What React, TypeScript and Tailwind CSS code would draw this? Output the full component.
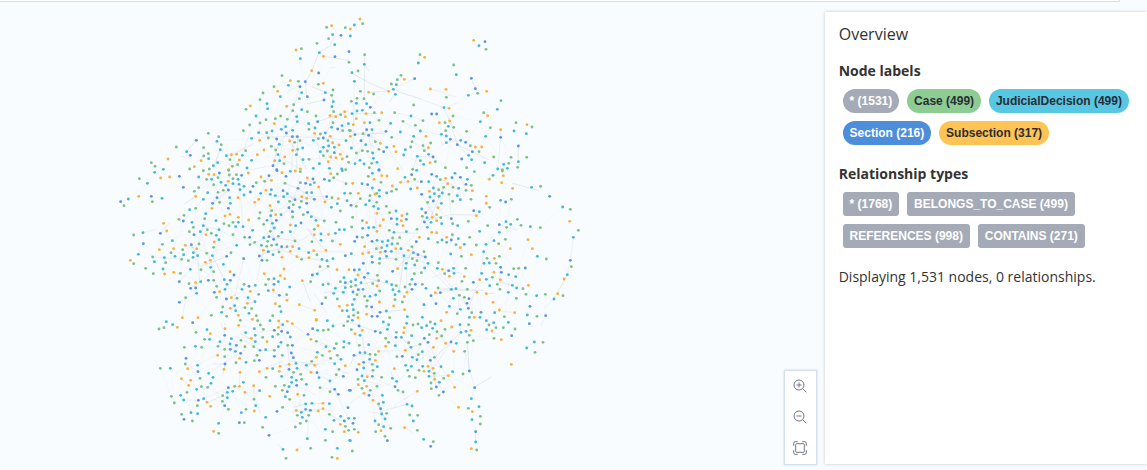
import React from 'react';

type Tile = { x: number; y: number; nodes: string; links: string };

const colors: Record<string, string> = {
  g: '#7cc184',
  o: '#f9b13c',
  c: '#41b9db',
  b: '#5b93e4',
};

// Node positions are stored in thirds of a pixel, relative to their tile.
const tiles: Tile[] = [
  {
    x: 110,
    y: 10,
    nodes:
      'g650,52 o665,47 g706,53 c668,74 b693,76 g656,86 g621,100 c674,104 o558,120 g574,116 c628,128 o640,139 b675,140 c571,146 b717,125 g717,157 o605,182 b626,189 g516,197 o541,212 g565,214 b586,215 c535,226 b570,230 g625,223 o640,220 g492,230 o503,244 c575,248 c646,248 g669,240 g665,256 g459,249 g450,269 c511,260 b592,260 g568,266 b642,270 c670,275 c471,281 c473,296 o530,289 g551,284 c666,290 g408,298 o421,288 c575,299 g548,302 g592,305 g671,305 o704,305 c438,318 g512,318 g496,326 c560,320 g618,318 o660,317 o677,320 g692,314 o706,320 g532,328 g468,329 g450,339 o493,341 c562,335 c596,341 b623,335 g669,338 g419,345 c527,350 c514,358 c548,361 g597,358 c615,354 c665,352 b683,357 c696,347 c715,341 g400,362 g698,362 g718,361 c446,368 c470,368 c486,363 b529,369 o614,370 g631,372 c646,369 g295,370 g326,380 b547,380 b562,380 o661,379 c425,385 g475,384 b500,387 g625,386 b640,384 o449,391 o539,393 g570,392 g554,397 c610,391 g654,392 c708,392 b259,391 c321,394 o668,398 g334,404 c508,403 g484,409 o687,405 c640,412 c656,408 c673,412 g199,411 g281,413 c331,419 o462,420 g497,420 g407,422 c578,414 g563,418 o548,421 c230,425 g295,431 c631,425 g652,423 b673,428 b241,436 g281,438 o364,434 o380,433 c349,437 c397,436 o442,434 c504,434 c559,434 g640,437 o691,433 o662,441 o678,443 g711,440 o697,447 o174,447 c296,446 g360,449 o273,452 o388,450 c425,451 o524,441 o494,452 c509,452 c579,449 g597,448 o655,455 g124,458 c323,458 g383,464 g522,461 c628,461 g716,457 g135,469 o253,470 c310,467 g367,469 b489,467 g239,477 g298,477 c160,478 c411,474 o356,479 o571,477 c610,475 c658,475 c695,477 b500,479 g707,479',
    links:
      '675,77 660,108 628,126 602,190 586,216 590,260|530,245 568,226|585,222 655,248|642,270 590,282|530,289 558,276|360,434 405,412 421,362|365,436 428,403|425,385 500,380 560,380 650,384 714,391|446,368 500,388|640,139 718,151|676,172 660,174|212,440 240,438|230,425 259,391|570,230 547,303 532,328|548,302 596,341 615,354|490,467 504,403 562,335|500,479 520,390|545,479 550,375|560,479 563,380|500,436 574,479|667,248 669,338 646,369|623,335 717,302|610,391 700,479|640,384 720,440|540,393 590,479|380,433 354,479|620,386 633,470|461,348 464,346|646,248 605,230|717,355 671,305|330,419 309,479|489,467 420,479',
  },
  {
    x: 350,
    y: 10,
    nodes:
      'o30,27 g38,41 c13,45 o1,57 c1,78 g44,134 c43,163 g24,183 c6,188 c13,214 g210,134 o224,142 c205,159 g153,196 g142,209 o163,208 b194,206 g124,222 c139,224 c130,238 o116,244 c136,253 g31,244 o56,247 g71,252 g21,265 g42,266 g4,274 c19,280 c50,281 b61,292 c21,303 c37,301 c6,311 o48,311 g73,308 o95,308 g134,308 c183,318 g191,285 o19,326 g87,331 g159,334 g219,332 o10,344 o43,338 c60,338 c122,340 g196,346 b50,359 c66,359 g1,362 b108,364 c151,366 c211,363 b15,374 g39,371 b56,376 o1,379 g125,382 c191,379 o228,379 b33,392 g76,395 g186,395 o91,400 g242,399 c47,404 c4,414 c110,412 g182,411 o132,409 g219,407 o235,413 g87,418 c166,419 g37,422 g53,424 g19,429 c68,429 b101,425 o138,425 g223,422 c161,435 c236,433 c202,439 b249,441 c70,445 c30,451 c211,452 g256,455 o240,458 c15,461 c42,462 g65,460 c81,457 c221,463 g58,473 o143,476 g188,478 b87,479 g286,473 o371,91 b405,95 c387,107 g408,118 g311,165 c319,194 b364,205 b376,236 o410,244 g383,250 c355,256 o241,237 o288,238 g289,262 c282,293 o297,295 g309,318 b245,312 b260,312 o299,333 o268,338 g285,338 c295,349 g311,352 g287,362 g350,364 c274,373 c289,378 b301,388 c289,398 b322,404 c332,391 b347,397 g361,407 o376,411 o395,411 b367,425 g387,425 c356,436 b335,447 c365,449 c404,458 g350,473 g401,308 o413,317 c391,335 c442,298 g453,272 g421,353 o452,359 c407,379 b452,382 g498,338 o531,344 g546,351 c492,363 c529,371 b505,408 g431,441 g483,442 g530,442 c505,455 g476,460 c461,463 g503,472 c443,477 c472,475 g457,479',
    links:
      '5,190 60,219 116,244 56,247|116,244 194,206|130,238 282,293 323,278|136,253 118,276|141,245 218,268|205,159 210,134|282,293 299,333 322,404 415,448|289,398 332,391|0,362 50,376 102,395|2,311 83,311|134,308 183,318 219,332|159,334 211,363 289,378|15,374 104,370|33,392 0,423|50,359 15,461|43,134 43,266|13,214 8,420|242,237 320,262|364,205 376,236|442,298 453,272|452,359 452,382 443,477|505,408 504,455|56,376 72,460 106,477|110,412 159,479|188,478 202,439 249,441|274,405 289,398|33,392 96,420|43,163 58,184|45,404 0,465|121,340 108,364 53,372|356,436 322,404',
  },
  {
    x: 110,
    y: 170,
    nodes:
      'c134,7 g88,26 c112,40 o152,24 o179,21 b208,19 c266,21 g280,2 b220,52 g266,53 g253,64 c293,68 o257,79 o86,79 b124,79 c55,87 b32,95 g42,107 g127,95 c156,85 c280,88 o296,13 o312,14 b328,9 g290,28 c305,28 g324,23 g311,44 c333,37 c347,46 o355,34 g358,15 g379,14 g369,26 c384,28 b395,16 o415,9 g356,1 c369,41 c387,43 c402,49 b429,49 c390,59 b355,60 g340,61 g324,67 c402,75 b421,66 o384,83 b321,83 c359,83 g329,97 b308,100 c361,100 o306,115 b355,115 g257,115 c239,119 c287,131 g222,136 g207,148 b220,153 g284,146 c318,152 o345,138 o360,133 o385,142 c246,157 g342,161 g357,167 g369,157 c385,157 c377,170 c399,170 o416,150 g447,145 c280,167 g250,172 o161,160 o170,183 b151,190 c99,188 g71,195 g238,185 c271,185 b252,194 g292,179 o288,194 g304,190 c327,179 c319,196 c428,181 g369,194 g404,202 b419,202 c327,209 c187,212 o313,216 g434,217 g420,224 c380,226 b100,221 g157,223 o226,226 b244,224 g267,222 g311,232 o148,239 o191,236 o260,236 g218,239 g183,248 c250,248 g290,250 c85,253 c221,254 c195,259 c263,257 c307,257 g363,248 g128,261 c163,263 c249,262 b350,259 b401,266 o61,271 g71,281 c133,275 g167,278 g215,268 g235,272 o301,271 o286,277 c340,283 g107,295 c159,297 o191,307 o164,312 g130,311 g211,310 c241,298 g273,299 c302,292 g311,305 o360,305 b372,315 b208,335 g237,341 o257,338 c272,335 b295,331 g311,331 c343,329 b361,331 c351,343 g320,349 b242,355 b257,354 c345,358 c260,370 b313,367 o329,365 g227,383 b208,397 g320,382 b349,387 o364,383 g381,385 c396,358 g402,343 b417,349 c436,346 o421,364 c414,383 g446,373 o412,400 g338,411 c374,407 o361,415 c377,422 g405,413 g425,416 c435,395 c335,427 g350,439 g304,436 o385,436 c417,430 g439,437 o217,443 o264,443 o427,448 b501,2 o516,8 b528,19 c541,4 o556,3 o453,21 b477,17 g464,34 o484,31 g439,38 g525,40 g571,5 b609,27 o592,24 g613,38 c601,44 b587,40 g571,38 b643,28 c658,32 g671,23 o662,11 g682,12 c697,2 g708,41 b564,55 o626,51 c484,59 o468,61 b519,62 c452,70 c481,73 c496,77 c532,71 c590,68 c605,68 c704,70 c521,80 o434,97 o446,88 b555,89 g539,94 o575,80 o590,85 b613,88 g574,94 b590,100 c505,96 o480,107 g550,104 b537,113 c569,112 b650,80 o645,96 g666,83 o685,86 c711,92 c682,101 c664,112 g691,123 b547,125 b593,127 g485,122 g450,128 o497,134 c513,134 g548,141 g580,134 c604,140 c482,137 c471,151 b499,151 c618,151 g643,153 g461,163 c487,160 b573,159 o541,165 c557,167 o624,167 g678,157 c493,174 g481,184 g613,178 c541,185 c516,187 g505,199 b477,200 b491,208 o613,194 c633,192 o656,193 c676,190 c688,179 c703,179 c461,203 g473,214 g555,213 c633,211 g606,215 g667,213 c454,226 g470,229 g485,226 c500,224 b515,230 g531,230 o548,230 o691,223 o460,241 b475,245 g507,246 o541,244 c567,236 o611,242 o648,241 c596,248 g621,254 c489,254 b448,258 o516,262 o561,260 g575,268 o597,263 b456,271 g471,271 c636,268 c669,266 c651,272 b706,257 g630,290 g654,289 o681,299 o717,299 o522,297 o463,311 o511,317 o524,326 b607,315 c622,312 c702,323 g476,328 c492,326 c505,335 g467,344 b492,343 g602,335 o577,332 b706,338 g691,335 c639,344 g655,342 c539,351 c676,355 c706,353 c475,362 o490,360 b508,376 g530,374 o531,391 c671,370 c700,367 g647,383 g682,387 b636,401 o496,401 g509,409 o568,404 o688,409 o712,406 o614,421 g697,422 c711,422 c513,425 g488,437 c716,440 o619,448',
    links:
      '222,103 257,79|220,153 257,115 280,88|100,188 140,178|151,190 180,157|32,95 56,87|128,261 215,268|242,224 263,257 268,330|226,226 295,248 311,305|242,300 208,335|242,355 272,335|208,397 260,370|321,83 355,115 387,142|355,60 308,100|280,167 327,179 380,208|398,166 405,202 461,241|420,224 477,200 555,213|437,42 500,12|410,101 452,70 521,80 590,85 686,90|525,40 564,55 613,88|570,40 537,113 461,203|575,80 652,80|626,51 645,96|521,62 593,127 640,153|478,100 482,137 491,208|593,179 650,246|598,180 618,220|633,192 691,223|520,240 561,260 660,275|508,246 607,191|551,244 705,246|448,258 475,245 531,230|420,364 475,362 540,387|640,368 707,364|577,332 601,395|614,421 570,404|613,372 650,430|607,315 660,290|471,344 511,317|522,297 505,335|350,259 275,288|350,387 394,366|335,427 361,415 405,413|412,400 435,395|217,443 227,383|660,22 709,40|676,355 719,342|477,17 433,115|390,59 399,170|307,257 343,329|460,241 440,330|401,266 363,430',
  },
  {
    x: 350,
    y: 170,
    nodes:
      'b87,1 c67,10 g55,19 o95,17 o111,18 o72,28 g93,37 o8,40 c36,41 b53,44 o127,48 c67,54 c88,61 g80,70 g125,64 c110,69 g139,58 o25,70 g1,70 o75,73 g60,77 c88,79 g31,86 c58,92 g80,97 c47,104 b3,106 g19,109 c71,109 g109,109 c85,116 c138,123 g119,128 o81,130 o156,137 g171,132 g8,142 b124,146 c141,147 b169,148 o154,152 g37,152 o100,149 o50,158 c141,163 o159,167 o90,167 c71,172 c38,175 c56,173 g5,171 g118,181 c132,187 o81,184 c169,185 b53,196 b21,201 g37,202 b14,214 b66,214 c81,211 c97,215 c114,212 g128,204 g149,203 c126,222 g143,221 c111,227 o44,230 g79,236 g95,233 o137,236 c153,236 b106,244 c124,244 o175,241 g186,230 c4,251 o38,251 o56,248 o91,247 c66,260 c110,259 c89,266 g138,268 c162,257 c190,248 b204,254 b226,261 g187,266 g201,272 g222,245 b40,280 b67,277 g88,280 c169,280 c194,285 c167,295 b13,300 c28,299 o143,296 b128,304 o24,315 g82,316 b43,322 c54,310 c17,329 g86,332 c3,335 c33,338 c110,335 g193,311 g214,308 c224,294 c234,280 c125,344 g139,347 c186,328 g180,343 b196,343 g217,343 g17,346 g3,350 o81,348 g68,341 b25,359 c39,358 b9,366 c129,359 g165,351 b186,358 c228,355 g89,363 o171,367 c147,364 c135,374 g21,374 g44,379 c60,379 c77,375 o163,380 g135,389 g52,392 g157,396 c13,388 o88,396 c7,404 g50,409 b65,411 o131,408 b222,404 c10,419 o164,419 c109,423 b90,427 o50,433 g24,428 g11,436 b66,439 b82,439 o24,443 g119,443 c172,440 c217,442 c165,22 b185,14 c200,1 g194,28 o174,34 o152,37 b214,35 c236,35 c182,57 o202,54 b215,73 b245,13 c260,19 o287,25 b306,23 g271,29 c315,10 b331,22 c352,28 o293,41 b348,43 g364,46 g281,52 g309,52 c326,55 c250,54 g266,59 o238,64 g348,61 o367,62 c277,69 g297,73 c253,71 c267,79 c240,81 c322,77 g308,94 c331,89 g363,88 b250,93 g233,97 c274,100 o264,113 c215,117 b227,128 o260,134 g217,139 c231,143 o247,142 g272,143 b304,146 b223,156 c243,157 o260,152 c275,161 g308,161 g355,154 c323,167 g201,178 c232,172 o245,187 o260,188 g307,194 o208,202 o290,202 c235,206 b199,215 c276,210 g263,217 c290,217 b304,210 c325,206 g359,202 g318,224 c343,223 o331,233 g379,225 c389,184 c302,252 g334,259 o364,254 g265,278 c262,295 o277,298 c311,295 b296,302 g284,311 c312,310 o298,319 g347,295 o343,320 g336,334 b370,337 o389,329 c395,310 c409,328 c402,280 c418,279 g411,265 o433,265 g438,280 g264,354 c304,358 c318,356 b271,368 o256,368 b243,377 g328,376 g343,382 c310,385 b357,386 g352,358 o381,367 o409,371 b258,401 b351,400 b355,415 c298,409 c331,418 o290,427 g322,431 g365,428 b393,427 c358,442 o373,442 c390,442 g373,5 o409,79 o409,100 g419,112 b371,122 c388,125 o379,137 c429,16 o418,28 o460,17 g457,3 o455,38 o488,55 c545,52 g572,49 c452,91 b467,96 g484,88 b599,79 c638,111 g661,118 o659,154 g685,181 c670,202 g502,148 c468,155 c482,163 g513,166 b448,164 g413,167 g470,172 c541,170 g571,173 c448,187 g466,208 c432,212 o534,209 g446,221 c408,223 o481,236 o547,236 c401,245 c562,259 g589,267 g448,259 b661,271 g664,290 b452,292 g491,296 g506,295 b526,294 o432,307 b454,307 c476,314 c497,320 g427,322 o451,329 c652,314 o642,327 c419,347 g442,343 c487,346 o535,346 c500,354 g450,358 g519,356 c475,367 g528,373 c560,377 g586,373 o623,371 g639,377 g499,385 c612,387 o429,397 b540,409 o448,420 c434,428 o494,428 g463,440 c532,435 g561,439 b587,437',
    links:
      '488,40 567,62|448,164 502,181|482,163 502,181|304,134 379,135|371,122 388,125 379,137|234,150 301,134|132,187 204,190|35,245 90,230|44,250 106,244 180,256|88,266 226,261|60,77 100,149|71,109 81,184|3,106 24,98|75,73 125,64 165,22|50,50 88,79 141,147|154,37 214,35|141,245 200,192 245,142|201,178 250,93|215,73 260,152|298,73 304,146|348,61 331,22|281,52 238,150|245,13 301,42 350,80|199,215 169,280 171,367|128,304 190,248 226,261|190,248 371,427|226,261 350,400|162,257 147,364|110,259 66,214|54,196 143,296|50,325 139,347 163,380|13,300 86,332|28,299 80,392|3,350 89,330|40,405 88,439|65,411 9,366|90,427 164,419|163,351 222,404|258,401 243,377 318,356|270,360 404,361|264,354 352,358|355,415 389,329 401,245|409,371 434,370|430,424 490,427|580,417 612,387|612,387 652,314|652,314 662,271|296,302 245,324|277,298 334,310|204,254 172,220|160,167 169,185|409,28 429,16|409,79 409,100|448,340 451,292|487,346 448,335|432,212 408,223|661,271 670,202',
  },
  {
    x: 110,
    y: 320,
    nodes:
      'c169,5 c188,14 g162,23 g147,27 o202,22 b248,8 g258,37 c291,29 o301,41 g284,58 c299,58 g223,82 c256,79 g275,82 c330,65 b344,46 o345,26 o386,16 g391,1 c364,56 c360,72 b379,76 b361,88 c376,94 b392,100 g324,79 g344,88 o323,106 g344,110 c407,38 c433,26 g443,2 g451,15 g460,28 c436,46 g458,52 o424,55 c436,65 g393,61 g405,80 g431,80 c450,91 c467,89 o471,65 g441,106 b448,121 g433,122 c408,127 g378,128 o389,115 b345,132 o342,148 o390,157 b228,115 g226,132 c263,136 o233,146 b264,155 c296,160 c309,172 g151,145 c181,145 o214,176 o242,181 g270,175 o236,196 g274,200 g293,202 c303,190 c260,208 g231,217 c212,226 c221,240 g184,229 g193,249 b265,241 c281,236 o291,247 g262,257 o302,259 g215,283 b222,298 g247,303 c243,278 c263,281 c326,310 o311,334 g326,340 b355,203 g374,199 o388,199 c400,187 c352,217 c368,214 o405,217 c352,233 g338,227 g337,244 b344,257 g355,268 o431,197 c449,212 g432,238 c437,257 g408,268 o433,273 c394,278 b388,308 g403,308 c467,292 g458,322 b477,346 b501,274 g518,262 o479,229 g468,172 o448,155 o471,145 c488,146 c519,388 o561,390 g528,415 g602,385 c592,356 g556,321 g571,310 g589,303 c480,2 o506,3 c518,14 o505,22 o532,4 o547,11 b493,31 b515,34 g504,43 c488,50 b533,38 c541,51 b608,26 b594,43 c623,31 g640,31 g655,29 c669,18 o603,58 g619,64 c652,2 o619,1 g713,4 g701,17 c513,67 g533,76 b547,76 c505,80 g493,91 b544,99 g517,106 b493,109 b550,113 o537,133 c558,130 c589,136 g605,124 o614,136 o619,112 c622,97 g637,106 c648,80 g679,71 c673,85 o659,94 c702,65 g701,82 c717,70 g682,106 c693,118 g662,115 c674,131 o706,137 g687,148 g679,164 b700,169 o510,139 b537,148 c561,145 o508,154 g551,157 c515,169 g572,163 c545,172 c559,181 g575,178 o603,157 b621,158 c627,173 c660,183 c545,187 b560,196 c589,193 g523,196 g496,199 c537,200 g517,211 b532,215 o563,223 g582,226 c526,230 g539,238 g630,203 g660,215 b674,208 b685,223 b718,211 c587,252 c606,250 o639,250 c658,251 c587,268 o559,271 c574,277 b601,271 o625,273 o639,266 b714,263 g562,286 g596,286 c577,292 g658,283 c692,289 c672,301 b703,303 c716,295 o691,313 g706,319 c646,328 g668,335 o703,335 g716,331 g646,361 c719,361 c682,385 g666,412 o682,415',
    links:
      '308,132 345,132|299,158 361,116 392,100|226,132 264,155|237,196 214,176|214,240 265,241|184,229 193,249|296,247 330,230|345,5 345,44|332,8 344,46|392,40 436,65|400,60 450,91|424,55 376,50|450,91 493,91|448,155 496,140|474,140 520,124|503,373 519,388|556,395 573,378|510,139 537,133 648,132|540,122 622,134|558,130 660,183|537,148 515,180|545,187 523,226|605,124 648,80|669,18 713,4|608,26 594,43|660,183 719,153|679,150 719,161|550,262 587,252 639,250|587,268 670,270|592,356 596,286|549,273 625,273|533,4 583,37|506,4 550,113|532,76 540,145|619,64 679,85|630,203 674,208 685,223|658,283 692,303|674,208 712,290|352,203 337,257|431,197 432,238|390,157 388,199|438,242 452,282|345,132 338,166|493,31 448,36|560,196 618,225',
  },
  {
    x: 350,
    y: 320,
    nodes:
      'c7,1 b27,18 g4,29 o37,31 o15,41 c30,46 b76,34 c91,38 c100,6 c116,14 c112,28 g139,37 b138,52 c154,52 o161,38 o163,23 c170,10 g189,15 g204,12 c185,47 g107,55 g116,67 o107,79 c136,77 g28,76 c56,74 g176,68 c183,82 g210,73 o166,91 o86,94 c30,98 c45,98 g60,103 g76,104 b12,106 c59,118 o76,121 g141,110 b157,109 c187,112 c201,119 g205,104 c217,95 b41,127 o27,133 g67,133 c41,144 c82,140 b21,149 g69,151 o133,146 c167,136 c184,139 g173,151 g207,151 c218,139 o222,154 c127,175 c140,184 g95,172 o52,170 c67,169 c36,168 g24,178 c43,182 o25,194 g36,205 o50,199 g81,199 g61,211 b1,211 o42,220 b57,226 b135,200 g144,211 g159,216 o202,214 c97,226 o69,241 c100,247 g86,252 b92,266 c95,282 g110,280 c105,297 c75,303 g86,314 c13,295 b9,310 g13,328 o25,337 g77,335 o93,332 c101,320 g122,325 g105,349 b112,362 c1,362 g7,393 o164,323 g202,331 c190,303 g179,285 g203,286 c171,253 c186,258 c221,358 g250,365 b242,379 c215,23 c230,17 g241,6 c248,25 c255,12 o273,2 g285,28 o305,21 c330,14 c333,37 c348,34 o363,31 g356,14 g261,35 g238,44 g275,48 b223,55 o260,55 b234,67 o250,82 o287,70 b303,66 c319,70 g352,67 g370,62 g358,46 o311,94 g344,94 g253,112 b241,121 o234,139 o249,145 c273,140 c237,154 g253,160 c308,155 g339,162 b358,153 c237,169 g196,173 g178,169 o254,178 o295,167 g281,175 c268,187 g243,189 b259,201 g244,206 b280,216 g267,226 o314,202 o326,262 g355,265 o367,275 c364,236 b374,203 c387,260 g391,289 c366,299 g391,312 b377,335 c377,366 o364,386 g380,390 c409,2 g417,15 c431,8 c410,29 g438,23 g460,23 o426,33 g432,55 o454,59 b485,47 c475,7 g495,27 b538,11 c530,84 c553,66 g579,67 g555,97 o484,133',
    links:
      '375,200 424,171|304,240 326,262|156,320 188,338|100,272 171,253|52,275 92,280|130,258 202,214|0,8 76,34|76,34 116,14|27,0 45,98|60,103 12,106 0,140|86,94 166,91|124,155 127,175|210,73 183,82 154,52|234,67 255,112 314,202|241,121 259,201|234,139 280,216|223,55 191,115|303,66 250,145|330,14 333,37 254,112|261,35 287,70|364,236 374,203 344,94|377,335 377,366|57,226 92,266 105,297|15,41 30,98|86,252 97,290|42,220 0,250|136,77 138,52|530,84 553,66|183,139 135,200|179,285 190,303|358,153 352,67|1,211 50,185 95,195|250,82 196,135|237,169 295,167|573,20 580,0|260,55 319,12',
  },
];

const graph = tiles.map((t) => {
  const nodes = t.nodes.split(' ').map((n) => {
    const [x, y] = n.slice(1).split(',').map(Number);
    return { x, y, color: colors[n[0]] };
  });
  // Short-range relationships form the faint web behind the nodes.
  let web = '';
  nodes.forEach((a, i) => {
    for (const step of [13, 29, 47]) {
      const b = nodes[(i + step) % nodes.length];
      const d = Math.hypot(a.x - b.x, a.y - b.y);
      if (d > 30 && d < 105) web += `M${a.x} ${a.y}L${b.x} ${b.y}`;
    }
  });
  return { ...t, nodes, web, links: t.links.split('|') };
});

function Graph() {
  return (
    <svg className="block h-full w-full" viewBox="0 0 824 470" aria-label="Graph">
      {graph.map((t) => (
        <g key={`l${t.x}-${t.y}`} transform={`translate(${t.x} ${t.y}) scale(.333333)`} fill="none" stroke="#a5abb6">
          <path d={t.web} strokeOpacity="0.12" strokeWidth="1.5" />
          {t.links.map((points, i) => (
            <polyline key={i} points={points} strokeOpacity={i % 3 === 0 ? 0.4 : 0.26} strokeWidth="1.8" />
          ))}
        </g>
      ))}
      {graph.map((t) => (
        <g key={`n${t.x}-${t.y}`} transform={`translate(${t.x} ${t.y}) scale(.333333)`}>
          {t.nodes.map((n, i) => (
            <circle key={i} cx={n.x} cy={n.y} r="4.3" fill={n.color} />
          ))}
        </g>
      ))}
    </svg>
  );
}

function Chip({ className, children }: { className: string; children: React.ReactNode }) {
  return (
    <span className={`flex h-6 items-center whitespace-nowrap px-[6.9px] font-['Liberation_Sans',sans-serif] text-xs font-bold ${className}`}>
      {children}
    </span>
  );
}

const iconButton = 'flex h-[31px] w-full items-center justify-center pb-px pr-px text-[#717784]';

function ZoomIcon({ plus }: { plus?: boolean }) {
  return (
    <svg className="size-[14px]" viewBox="0 0 14 14" fill="none" stroke="currentColor" strokeWidth="1">
      <circle cx="6" cy="6" r="5" />
      <path d={plus ? 'M3.5 6h5M6 3.5v5M9.6 9.6l3.7 3.7' : 'M3.5 6h5M9.6 9.6l3.7 3.7'} />
    </svg>
  );
}

export default function App() {
  return (
    <div className="relative flex h-[470px] w-[1147px] overflow-hidden bg-[#f9fcff] font-['Open_Sans','Noto_Sans',sans-serif] text-[#333333]">
      <div className="absolute left-0 top-0 h-0.5 w-[1120px] rounded-br-sm border-b border-r border-[#d5dfe9] bg-white" />
      <main className="h-full w-[825px] shrink-0 pr-px">
        <Graph />
      </main>
      <aside className="mt-3 h-[452px] flex-1 bg-white pl-[13.7px] shadow-[0_0_3px_rgba(60,80,110,0.3)]">
        <h1 className="pt-[10px] text-base leading-6">Overview</h1>
        <h2 className="mt-[15px] text-sm font-bold leading-5">Node labels</h2>
        <div className="ml-1 mt-2 flex flex-wrap gap-2">
          <Chip className="rounded-full bg-[#a5abb6] text-white">* (1531)</Chip>
          <Chip className="rounded-full bg-[#8dcc93] text-[#2a2c34]">Case (499)</Chip>
          <Chip className="rounded-full bg-[#57c7e3] text-[#2a2c34]">JudicialDecision (499)</Chip>
          <Chip className="rounded-full bg-[#4c8eda] text-white">Section (216)</Chip>
          <Chip className="rounded-full bg-[#ffc454] text-[#2a2c34]">Subsection (317)</Chip>
        </div>
        <h2 className="mt-[19px] text-sm font-bold leading-5">Relationship types</h2>
        <div className="ml-1 mt-2 flex flex-wrap gap-2 pr-10">
          <Chip className="rounded-[3px] bg-[#a5abb6] text-white">* (1768)</Chip>
          <Chip className="rounded-[3px] bg-[#a5abb6] text-white">BELONGS_TO_CASE (499)</Chip>
          <Chip className="rounded-[3px] bg-[#a5abb6] text-white">REFERENCES (998)</Chip>
          <Chip className="rounded-[3px] bg-[#a5abb6] text-white">CONTAINS (271)</Chip>
        </div>
        <p className="mt-[19px] text-sm leading-5">Displaying 1,531 nodes, 0 relationships.</p>
      </aside>
      <div className="absolute left-[784px] top-[370px] h-[95px] w-[33px] border border-[#d3e0f2] bg-white shadow-[0_0_2px_rgba(80,110,150,0.3)]">
        <button className={iconButton} aria-label="Zoom in"><ZoomIcon plus /></button>
        <button className={iconButton} aria-label="Zoom out"><ZoomIcon /></button>
        <button className={iconButton} aria-label="Zoom to fit">
          <svg className="size-[14px]" viewBox="0 0 14 14" fill="none" stroke="currentColor">
            <rect x="2.7" y="2.7" width="8.6" height="8.6" rx="1" />
            <path d="M.7 4.8V2.2Q.7.7 2.2.7h2.6M9.2.7h2.6q1.5 0 1.5 1.5v2.6M13.3 9.2v2.6q0 1.5-1.5 1.5H9.2M4.8 13.3H2.2q-1.5 0-1.5-1.5V9.2" />
          </svg>
        </button>
      </div>
    </div>
  );
}
